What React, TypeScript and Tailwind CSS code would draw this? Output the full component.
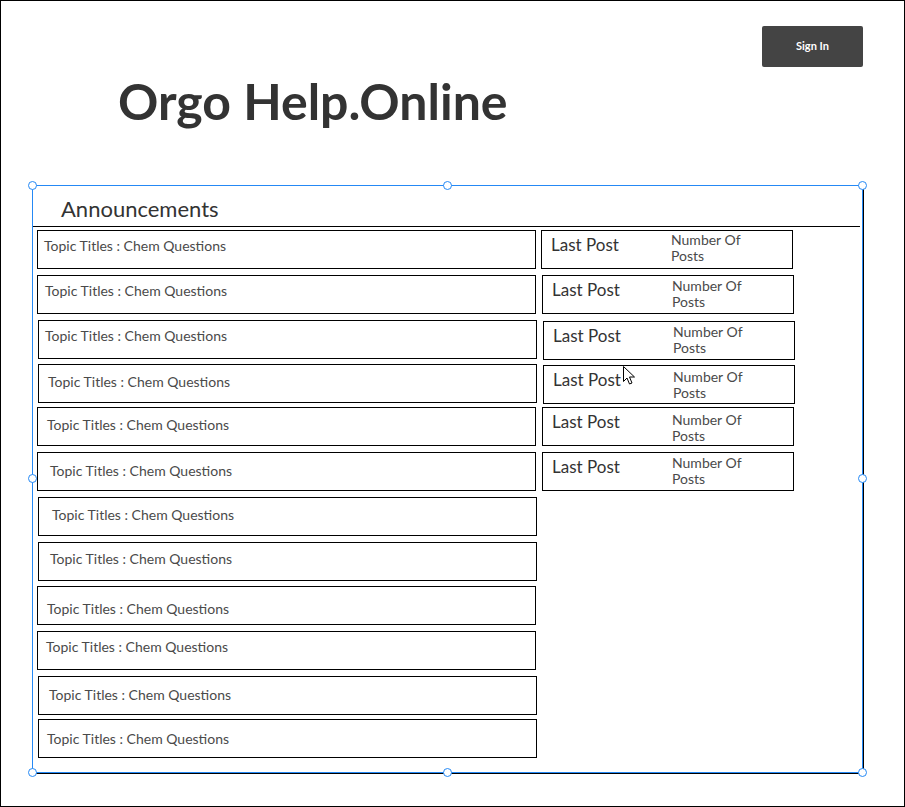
const topics = [
  { box: 'mt-[3px] ml-[4px]', text: 'pt-[5px] pl-[6px]' },
  { box: 'mt-[6px] ml-[4px]', text: 'pt-[5px] pl-[7px]' },
  { box: 'mt-[6px] ml-[5px]', text: 'pt-[5px] pl-[6px]' },
  { box: 'mt-[5px] ml-[5px]', text: 'pt-[7px] pl-[9px]' },
  { box: 'mt-[4px] ml-[4px]', text: 'pt-[7px] pl-[9px]' },
  { box: 'mt-[6px] ml-[4px]', text: 'pt-[8px] pl-[12px]' },
  { box: 'mt-[6px] ml-[5px]', text: 'pt-[7px] pl-[13px]' },
  { box: 'mt-[6px] ml-[5px]', text: 'pt-[6px] pl-[11px]' },
  { box: 'mt-[5px] ml-[4px]', text: 'pt-[12px] pl-[9px]' },
  { box: 'mt-[6px] ml-[4px]', text: 'pt-[5px] pl-[8px]' },
  { box: 'mt-[6px] ml-[5px]', text: 'pt-[8px] pl-[10px]' },
  { box: 'mt-[4px] ml-[5px]', text: 'pt-[9px] pl-[8px]' },
];

const posts = [
  { box: 'mt-[3px] ml-[4px]', count: 'pt-[1px]' },
  { box: 'mt-[6px] ml-[5px]', count: 'pt-[2px]' },
  { box: 'mt-[7px] ml-[6px]', count: 'pt-[2px]' },
  { box: 'mt-[5px] ml-[6px]', count: 'pt-[3px]' },
  { box: 'mt-[3px] ml-[5px]', count: 'pt-[4px]' },
  { box: 'mt-[6px] ml-[5px]', count: 'pt-[2px]' },
];

// selection handles of the mockup frame
const handles = [
  'left-[-5px] top-[-5px]',
  'left-[410px] top-[-5px]',
  'right-[-5px] top-[-5px]',
  'left-[-5px] top-[288px]',
  'right-[-5px] top-[288px]',
  'left-[-5px] bottom-[-5px]',
  'left-[410px] bottom-[-5px]',
  'right-[-5px] bottom-[-5px]',
];

export default function App() {
  return (
    <div className="relative w-[905px] h-[807px] border border-black bg-white font-['Lato','Open_Sans',sans-serif] overflow-hidden">
      <div className="flex justify-end pt-[25px] pr-[41px]">
        <button className="w-[101px] h-[41px] bg-[#444444] rounded-[2px] text-white text-[11px] font-bold">
          Sign In
        </button>
      </div>

      <h1 className="ml-[117px] mt-[6px] text-[50px] leading-[56px] font-bold text-[#333333]">
        Orgo Help.Online
      </h1>

      <div className="relative ml-[31px] mt-[56px] w-[831px] h-[588px] border border-[#2589f5] shadow-[1px_1px_0_#000]">
        <div className="h-[41px] mr-[2px] border-b border-black pt-[11px] pl-[28px] text-[22px] leading-[24px] text-[#333333]">
          Announcements
        </div>

        <div className="flex">
          <div className="w-[504px] flex flex-col">
            {topics.map((t, i) => (
              <div key={i} className={`${t.box} w-[499px] h-[39px] border border-black`}>
                <div className={`${t.text} text-[14px] leading-[20px] text-[#4a4a4a]`}>
                  Topic Titles : Chem Questions
                </div>
              </div>
            ))}
          </div>

          <div className="flex flex-col">
            {posts.map((p, i) => (
              <div key={i} className={`${p.box} w-[252px] h-[39px] border border-black flex`}>
                <div className="w-[129px] pl-[9px] pt-[4px] text-[17px] leading-[20px] text-[#333333]">
                  Last Post
                </div>
                <div className={`${p.count} text-[14px] leading-[16px] text-[#4a4a4a]`}>
                  Number Of
                  <br />
                  Posts
                </div>
              </div>
            ))}
          </div>
        </div>

        {handles.map((h) => (
          <span
            key={h}
            className={`absolute ${h} w-[9px] h-[9px] rounded-full border border-[#2589f5] bg-white`}
          />
        ))}
      </div>

      {/* mouse pointer left on the mockup */}
      <svg className="absolute left-[622px] top-[365px]" width="13" height="20" viewBox="0 0 13 20">
        <path
          d="M0.5 0.5 L0.5 15.5 L4 12 L6.5 18 L9 17 L6.5 11 L11.5 11 Z"
          fill="#fff"
          stroke="#000"
          strokeWidth="1"
          strokeLinejoin="round"
        />
      </svg>
    </div>
  );
}
